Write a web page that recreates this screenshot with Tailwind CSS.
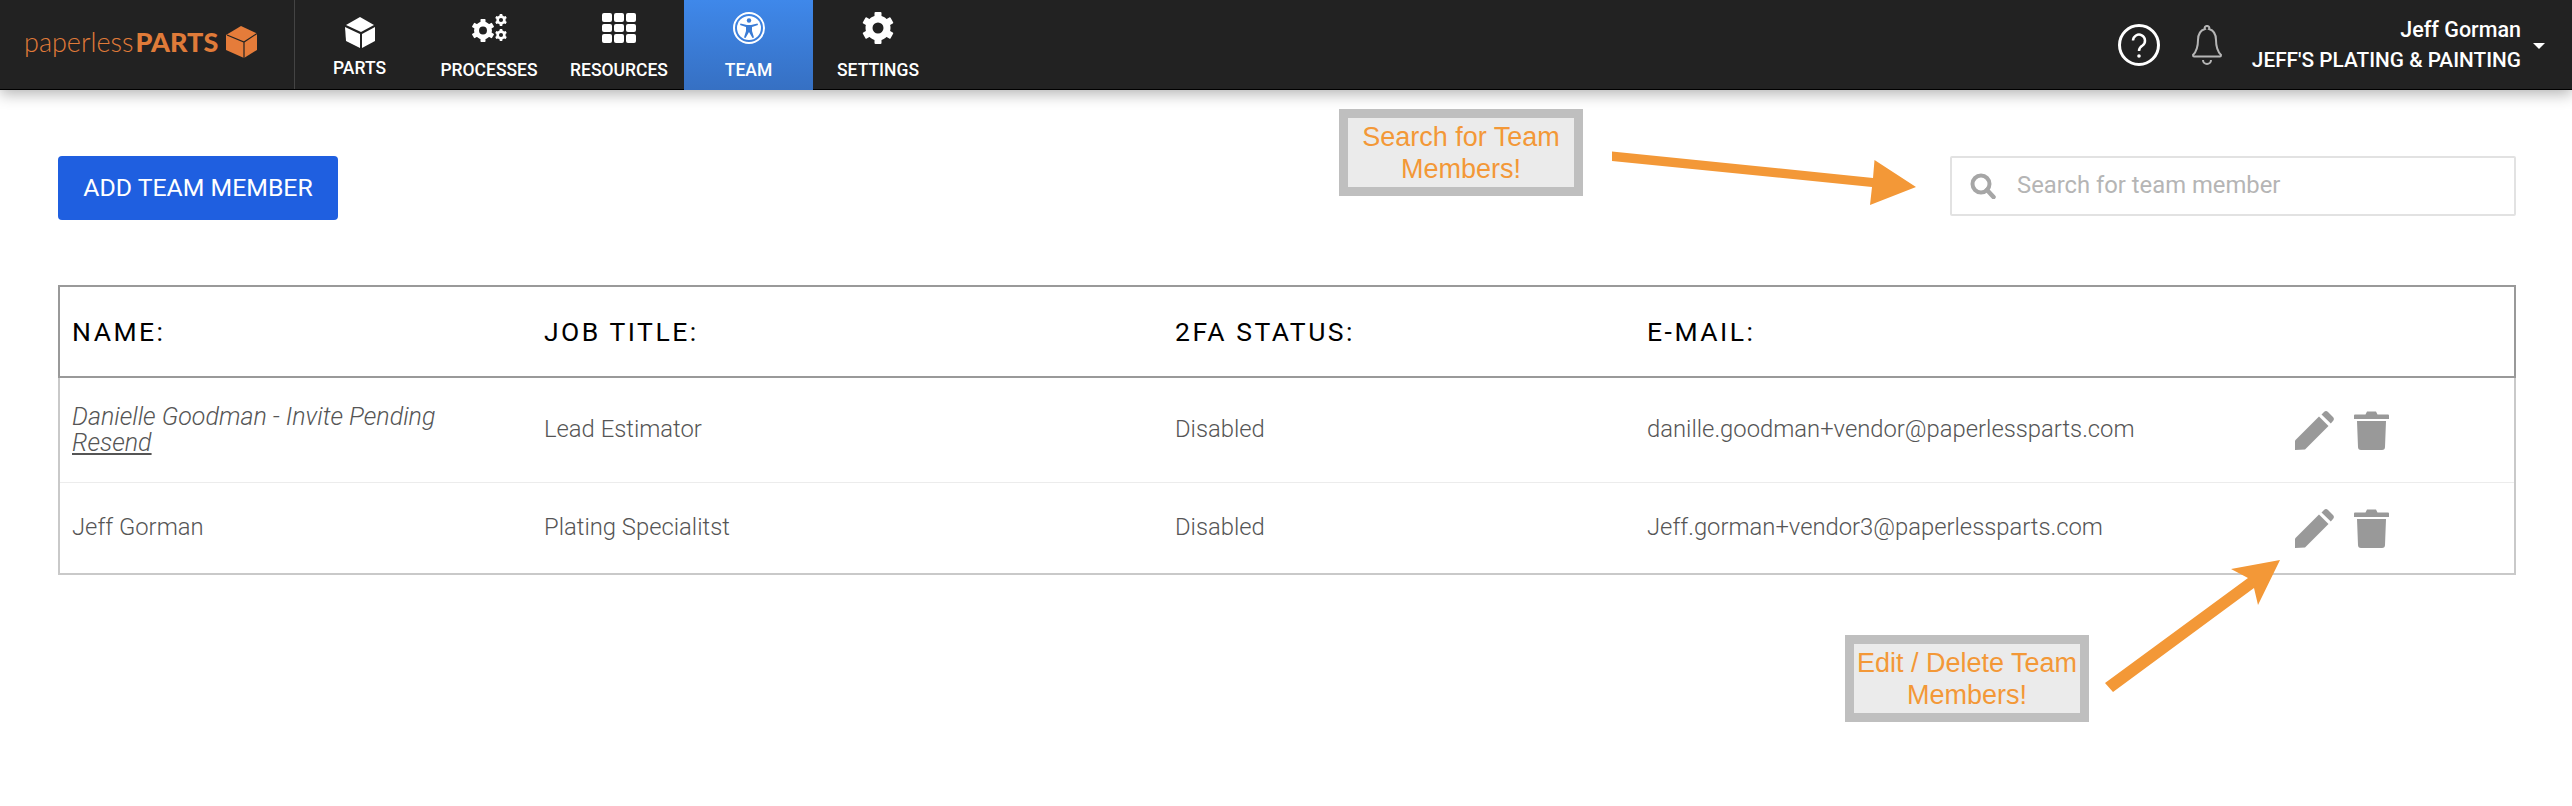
<!DOCTYPE html>
<html lang="en">
<head>
  <meta charset="UTF-8" />
  <title>Team</title>
  <script src="https://cdn.jsdelivr.net/npm/@tailwindcss/browser@4"></script>
</head>
<body class="relative h-[806px] w-[2572px] overflow-hidden bg-white font-['Roboto',sans-serif]">
  <svg class="hidden">
    <symbol id="gear" viewBox="0 0 32 32">
      <circle cx="16" cy="16" r="9" fill="none" stroke="currentColor" stroke-width="7" />
      <g fill="currentColor">
        <rect x="12.5" y="0" width="7" height="7" rx="1" />
        <rect x="12.5" y="0" width="7" height="7" rx="1" transform="rotate(60 16 16)" />
        <rect x="12.5" y="0" width="7" height="7" rx="1" transform="rotate(120 16 16)" />
        <rect x="12.5" y="0" width="7" height="7" rx="1" transform="rotate(180 16 16)" />
        <rect x="12.5" y="0" width="7" height="7" rx="1" transform="rotate(240 16 16)" />
        <rect x="12.5" y="0" width="7" height="7" rx="1" transform="rotate(300 16 16)" />
      </g>
    </symbol>
    <symbol id="pencil" viewBox="0 0 39 39">
      <path fill="currentColor" d="M0 39V29.500L24 5.500L33.500 15L10 38.500Z" />
      <path fill="currentColor" d="M26.500 3.500L29 1a3 3 0 0 1 4 0L38 6a3 3 0 0 1 0 4L35.800 12.500Z" />
    </symbol>
    <symbol id="trash" viewBox="0 0 35 39">
      <path fill="currentColor" d="M0 4.500a1 1 0 0 1 1-1H11.500L13 .5H22L23.500 3.500H34a1 1 0 0 1 1 1V8H0Z" />
      <path fill="currentColor" d="M3 10H32L31 36a3 3 0 0 1-3 3H7a3 3 0 0 1-3-3Z" />
    </symbol>
  </svg>

  <!-- top bar -->
  <header class="flex h-[90px] items-stretch justify-between border-b border-black bg-[#222222] shadow-[0_4px_14px_rgba(0,0,0,0.3)]">
    <div class="flex">
      <div class="flex w-[295px] items-center border-r border-[#444444] pb-[6px] pl-[24px]">
        <span class="font-['Lato',sans-serif] text-[27px] leading-none font-light text-[#e07b39]">paperless</span><span class="ml-[2px] font-['Lato',sans-serif] text-[27px] leading-none font-black text-[#e07b39]">PARTS</span>
        <svg class="ml-[8px] h-[32px] w-[32px]" viewBox="0 0 32 32">
          <path fill="#e57c3a" d="M15 0L31 7.500V24L18 32L0 24V9Z" />
          <path fill="none" stroke="#222222" stroke-width="1.200" d="M1 9L18 16L31 7.500M18 16V32" />
        </svg>
      </div>
      <nav class="flex text-[17.500px] font-medium text-white">
        <a class="flex w-[129px] flex-col items-center">
          <svg class="mt-[17px] h-[31px] w-[30px]" viewBox="0 0 30 31">
            <path fill="white" d="M15 0L29 8L16 15L1 8Z" />
            <path fill="white" d="M0 10L15 17V31L1 24Z" />
            <path fill="white" d="M30 10V24L17 31V17Z" />
          </svg>
          <span class="mt-[12px] leading-[16px]">PARTS</span>
        </a>
        <a class="flex w-[130px] flex-col items-center">
          <svg class="mt-[14px] h-[28px] w-[36px] text-white" viewBox="0 0 36 28">
            <use href="#gear" x="0" y="5" width="24" height="23" />
            <use href="#gear" x="24" y="0" width="12" height="12" />
            <use href="#gear" x="24" y="15" width="12" height="12" />
          </svg>
          <span class="mt-[20px] leading-[16px]">PROCESSES</span>
        </a>
        <a class="flex w-[130px] flex-col items-center">
          <div class="mt-[13px] grid h-[30px] w-[34px] grid-cols-3 grid-rows-3 gap-[2px]">
            <i class="rounded-[2px] bg-white"></i><i class="rounded-[2px] bg-white"></i><i class="rounded-[2px] bg-white"></i>
            <i class="rounded-[2px] bg-white"></i><i class="rounded-[2px] bg-white"></i><i class="rounded-[2px] bg-white"></i>
            <i class="rounded-[2px] bg-white"></i><i class="rounded-[2px] bg-white"></i><i class="rounded-[2px] bg-white"></i>
          </div>
          <span class="mt-[19px] leading-[16px]">RESOURCES</span>
        </a>
        <a class="flex h-[90px] w-[129px] flex-col items-center bg-gradient-to-b from-[#3f88ea] to-[#3670c3]">
          <svg class="mt-[12px] h-[32px] w-[32px]" viewBox="0 0 32 32">
            <circle cx="16" cy="16" r="15" fill="none" stroke="white" stroke-width="2" />
            <circle cx="16" cy="16" r="12" fill="white" />
            <g fill="#3a7bd5">
              <circle cx="16" cy="8.500" r="2.200" />
              <path d="M7.500 11.500L14 13H18L24.500 11.500L25 13L19 15V19L21 25.500L19.500 26L16 20L12.500 26L11 25.500L13 19V15L7 13Z" />
            </g>
          </svg>
          <span class="mt-[18px] leading-[16px]">TEAM</span>
        </a>
        <a class="flex w-[130px] flex-col items-center">
          <svg class="mt-[12px] h-[32px] w-[32px] text-white"><use href="#gear" width="32" height="32" /></svg>
          <span class="mt-[18px] leading-[16px]">SETTINGS</span>
        </a>
      </nav>
    </div>
    <div class="flex items-center pr-[27px] text-white">
      <svg class="h-[42px] w-[42px]" viewBox="0 0 42 42">
        <circle cx="21" cy="21" r="19.500" fill="none" stroke="white" stroke-width="3" />
        <path fill="none" stroke="white" stroke-width="2.500" d="M15 16.500a6 6 0 1 1 9.500 5C22 23 21 24 21 27" />
        <circle cx="21" cy="32" r="1.800" fill="white" />
      </svg>
      <svg class="ml-[32px] h-[40px] w-[30px]" viewBox="0 0 30 40">
        <path fill="none" stroke="#b5b5b5" stroke-width="2" d="M15 1a2 2 0 0 1 2 3c5 1.500 7 6 7 11 0 7 2 12 5 15 0 1-.5 1.500-1 1.500H2c-.5 0-1-.5-1-1.500 3-3 5-8 5-15 0-5 2-9.500 7-11a2 2 0 0 1 2-3Z" />
        <path fill="none" stroke="#b5b5b5" stroke-width="2" d="M11 35a4 4 0 0 0 8 0" />
      </svg>
      <div class="ml-[30px] flex flex-col items-end">
        <span class="text-[21.500px] leading-[31px] font-medium">Jeff Gorman</span>
        <span class="text-[20.800px] leading-[31px] font-medium">JEFF'S PLATING &amp; PAINTING</span>
      </div>
      <span class="mt-[3px] ml-[12px] h-0 w-0 border-x-[6px] border-t-[6px] border-x-transparent border-t-white"></span>
    </div>
  </header>

  <main class="pr-[56px] pl-[58px]">
    <div class="flex items-start justify-between pt-[66px]">
      <button class="h-[64px] w-[280px] rounded-[4px] bg-[#1f5fe0] text-[24.800px] text-white">ADD TEAM MEMBER</button>
      <div class="flex h-[60px] w-[566px] items-center rounded-[2px] border-2 border-[#e2e2e2] pl-[18px]">
        <svg class="h-[26px] w-[26px]" viewBox="0 0 26 26">
          <circle cx="11" cy="11" r="8.500" fill="none" stroke="#a6a6a6" stroke-width="4" />
          <path stroke="#a6a6a6" stroke-width="4.500" stroke-linecap="round" d="M17 17L23.500 24" />
        </svg>
        <span class="ml-[21px] text-[23.800px] text-[#b5b5b5]">Search for team member</span>
      </div>
    </div>

    <div class="mt-[65px] border-x-2 border-b-2 border-[#c9c9c9] text-[23.800px] text-[#555555]">
      <div class="-mx-[2px] grid h-[93px] grid-cols-[472px_631px_472px_1fr] items-center border-2 border-[#999999] pl-[12px] text-[26.500px] tracking-[2.500px] text-black">
        <span>NAME:</span><span>JOB TITLE:</span><span>2FA STATUS:</span><span>E-MAIL:</span>
      </div>
      <div class="grid h-[105px] grid-cols-[472px_631px_472px_648px_1fr] items-center border-b border-[#ececec] pl-[12px] font-light">
        <div class="text-[25px] leading-[26px] italic">Danielle Goodman - Invite Pending<br /><span class="underline">Resend</span></div>
        <span>Lead Estimator</span><span>Disabled</span><span>danille.goodman+vendor@paperlessparts.com</span>
        <div class="flex gap-[20px] text-[#999999]">
          <svg class="h-[39px] w-[39px]"><use href="#pencil" /></svg>
          <svg class="h-[39px] w-[35px]"><use href="#trash" /></svg>
        </div>
      </div>
      <div class="grid h-[90px] grid-cols-[472px_631px_472px_648px_1fr] items-center pl-[12px] font-light">
        <span>Jeff Gorman</span><span>Plating Specialitst</span><span>Disabled</span><span>Jeff.gorman+vendor3@paperlessparts.com</span>
        <div class="flex gap-[20px] text-[#999999]">
          <svg class="h-[39px] w-[39px]"><use href="#pencil" /></svg>
          <svg class="h-[39px] w-[35px]"><use href="#trash" /></svg>
        </div>
      </div>
    </div>
  </main>

  <!-- annotations on top of the screenshot -->
  <div class="absolute top-[109px] left-[1339px] flex h-[87px] w-[244px] items-center justify-center border-[9px] border-[#bfbfbf] bg-[#ebebeb] text-center font-['Liberation_Sans',sans-serif] text-[27px] leading-[32px] text-[#f39837]">Search for Team Members!</div>
  <div class="absolute top-[635px] left-[1845px] flex h-[87px] w-[244px] items-center justify-center border-[9px] border-[#bfbfbf] bg-[#ebebeb] text-center font-['Liberation_Sans',sans-serif] text-[27px] leading-[32px] text-[#f39837]">Edit / Delete Team Members!</div>
  <svg class="pointer-events-none absolute top-0 left-0 h-[806px] w-[2572px]" viewBox="0 0 2572 806">
    <path fill="#f39837" d="M1612 151.500L1873 178L1874.500 160L1916 187L1870 205L1872 187L1612 161Z" />
    <path fill="#f39837" d="M2105 683L2248 578L2231 569L2280 560L2258 605L2254 588L2113 692Z" />
  </svg>
</body>
</html>
